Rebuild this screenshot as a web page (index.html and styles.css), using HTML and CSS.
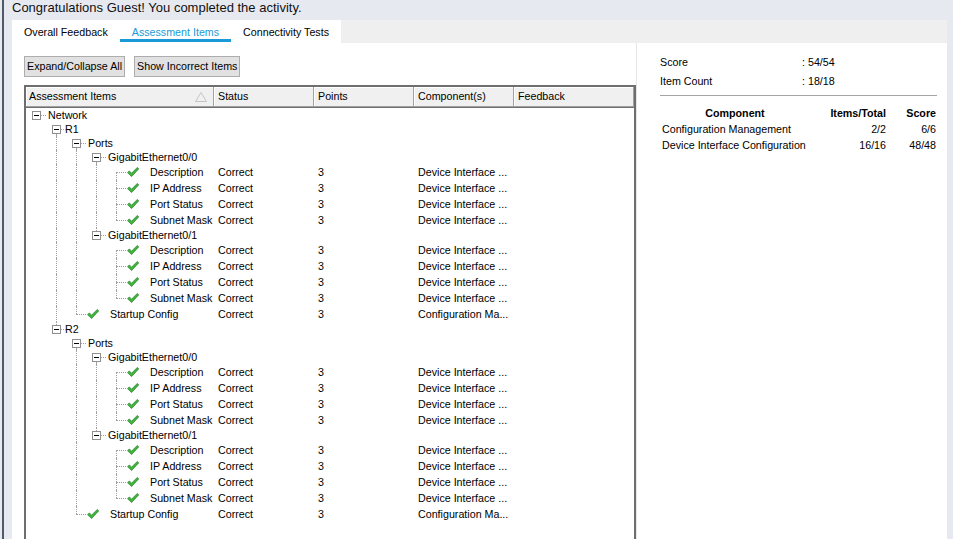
FILE: index.html
```html
<!DOCTYPE html>
<html>
<head>
<meta charset="utf-8">
<link rel="stylesheet" href="styles.css">
</head>
<body>
<div class="frame">
  <div class="title">Congratulations Guest! You completed the activity.</div>
  <div class="panel">
    <div class="tabs">
      <div class="tab">Overall Feedback</div>
      <div class="tab active">Assessment Items</div>
      <div class="tab">Connectivity Tests</div>
    </div>
    <div class="content">
      <div class="left">
        <div class="toolbar">
          <button class="btn">Expand/Collapse All</button>
          <button class="btn">Show Incorrect Items</button>
        </div>
        <div class="grid">
          <div class="ghead">
            <div class="hc c1"><span>Assessment Items</span><svg class="sort" width="12" height="10" viewBox="0 0 12 10"><polygon points="6,0.5 11.5,9.5 0.5,9.5" fill="none" stroke="#c4c4c4" stroke-width="1"/></svg></div>
            <div class="hc c2">Status</div>
            <div class="hc c3">Points</div>
            <div class="hc c4">Component(s)</div>
            <div class="hc c5">Feedback</div>
          </div>
          <div class="gbody">
            <!-- R1 -->
            <div class="row r14"><div class="tree"><span class="seg box"><i class="exp"></i></span><span class="label">Network</span></div><div class="cell"></div><div class="cell"></div><div class="cell"></div><div class="cell fb"></div></div>
            <div class="row r14"><div class="tree"><span class="seg"></span><span class="seg box down"><i class="exp"></i></span><span class="label tight">R1</span></div><div class="cell"></div><div class="cell"></div><div class="cell"></div><div class="cell fb"></div></div>
            <div class="row r14"><div class="tree"><span class="seg"></span><span class="seg pipe"></span><span class="seg box down"><i class="exp"></i></span><span class="label">Ports</span></div><div class="cell"></div><div class="cell"></div><div class="cell"></div><div class="cell fb"></div></div>
            <div class="row r14"><div class="tree"><span class="seg"></span><span class="seg pipe"></span><span class="seg pipe"></span><span class="seg box down"><i class="exp"></i></span><span class="label">GigabitEthernet0/0</span></div><div class="cell"></div><div class="cell"></div><div class="cell"></div><div class="cell fb"></div></div>
            <div class="row r16"><div class="tree"><span class="seg"></span><span class="seg pipe"></span><span class="seg pipe"></span><span class="seg pipe"></span><span class="seg leaf first"></span><span class="ok"><svg width="12" height="10" viewBox="0 0 12 10"><polygon points="0.5,5.6 2.4,4 4.5,6.2 10.4,0.4 11.7,1.9 4.5,9.6" fill="#3fb43f" stroke="#1d7f1d" stroke-width="0.7" stroke-linejoin="round"/></svg></span><span class="label">Description</span></div><div class="cell">Correct</div><div class="cell">3</div><div class="cell">Device Interface ...</div><div class="cell fb"></div></div>
            <div class="row r16"><div class="tree"><span class="seg"></span><span class="seg pipe"></span><span class="seg pipe"></span><span class="seg pipe"></span><span class="seg leaf mid"></span><span class="ok"><svg width="12" height="10" viewBox="0 0 12 10"><polygon points="0.5,5.6 2.4,4 4.5,6.2 10.4,0.4 11.7,1.9 4.5,9.6" fill="#3fb43f" stroke="#1d7f1d" stroke-width="0.7" stroke-linejoin="round"/></svg></span><span class="label">IP Address</span></div><div class="cell">Correct</div><div class="cell">3</div><div class="cell">Device Interface ...</div><div class="cell fb"></div></div>
            <div class="row r16"><div class="tree"><span class="seg"></span><span class="seg pipe"></span><span class="seg pipe"></span><span class="seg pipe"></span><span class="seg leaf mid"></span><span class="ok"><svg width="12" height="10" viewBox="0 0 12 10"><polygon points="0.5,5.6 2.4,4 4.5,6.2 10.4,0.4 11.7,1.9 4.5,9.6" fill="#3fb43f" stroke="#1d7f1d" stroke-width="0.7" stroke-linejoin="round"/></svg></span><span class="label">Port Status</span></div><div class="cell">Correct</div><div class="cell">3</div><div class="cell">Device Interface ...</div><div class="cell fb"></div></div>
            <div class="row r16"><div class="tree"><span class="seg"></span><span class="seg pipe"></span><span class="seg pipe"></span><span class="seg pipe"></span><span class="seg leaf last"></span><span class="ok"><svg width="12" height="10" viewBox="0 0 12 10"><polygon points="0.5,5.6 2.4,4 4.5,6.2 10.4,0.4 11.7,1.9 4.5,9.6" fill="#3fb43f" stroke="#1d7f1d" stroke-width="0.7" stroke-linejoin="round"/></svg></span><span class="label">Subnet Mask</span></div><div class="cell">Correct</div><div class="cell">3</div><div class="cell">Device Interface ...</div><div class="cell fb"></div></div>
            <div class="row r14"><div class="tree"><span class="seg"></span><span class="seg pipe"></span><span class="seg pipe"></span><span class="seg box up"><i class="exp"></i></span><span class="label">GigabitEthernet0/1</span></div><div class="cell"></div><div class="cell"></div><div class="cell"></div><div class="cell fb"></div></div>
            <div class="row r16"><div class="tree"><span class="seg"></span><span class="seg pipe"></span><span class="seg pipe"></span><span class="seg"></span><span class="seg leaf first"></span><span class="ok"><svg width="12" height="10" viewBox="0 0 12 10"><polygon points="0.5,5.6 2.4,4 4.5,6.2 10.4,0.4 11.7,1.9 4.5,9.6" fill="#3fb43f" stroke="#1d7f1d" stroke-width="0.7" stroke-linejoin="round"/></svg></span><span class="label">Description</span></div><div class="cell">Correct</div><div class="cell">3</div><div class="cell">Device Interface ...</div><div class="cell fb"></div></div>
            <div class="row r16"><div class="tree"><span class="seg"></span><span class="seg pipe"></span><span class="seg pipe"></span><span class="seg"></span><span class="seg leaf mid"></span><span class="ok"><svg width="12" height="10" viewBox="0 0 12 10"><polygon points="0.5,5.6 2.4,4 4.5,6.2 10.4,0.4 11.7,1.9 4.5,9.6" fill="#3fb43f" stroke="#1d7f1d" stroke-width="0.7" stroke-linejoin="round"/></svg></span><span class="label">IP Address</span></div><div class="cell">Correct</div><div class="cell">3</div><div class="cell">Device Interface ...</div><div class="cell fb"></div></div>
            <div class="row r16"><div class="tree"><span class="seg"></span><span class="seg pipe"></span><span class="seg pipe"></span><span class="seg"></span><span class="seg leaf mid"></span><span class="ok"><svg width="12" height="10" viewBox="0 0 12 10"><polygon points="0.5,5.6 2.4,4 4.5,6.2 10.4,0.4 11.7,1.9 4.5,9.6" fill="#3fb43f" stroke="#1d7f1d" stroke-width="0.7" stroke-linejoin="round"/></svg></span><span class="label">Port Status</span></div><div class="cell">Correct</div><div class="cell">3</div><div class="cell">Device Interface ...</div><div class="cell fb"></div></div>
            <div class="row r16"><div class="tree"><span class="seg"></span><span class="seg pipe"></span><span class="seg pipe"></span><span class="seg"></span><span class="seg leaf last"></span><span class="ok"><svg width="12" height="10" viewBox="0 0 12 10"><polygon points="0.5,5.6 2.4,4 4.5,6.2 10.4,0.4 11.7,1.9 4.5,9.6" fill="#3fb43f" stroke="#1d7f1d" stroke-width="0.7" stroke-linejoin="round"/></svg></span><span class="label">Subnet Mask</span></div><div class="cell">Correct</div><div class="cell">3</div><div class="cell">Device Interface ...</div><div class="cell fb"></div></div>
            <div class="row r16"><div class="tree"><span class="seg"></span><span class="seg pipe"></span><span class="seg leaf last"></span><span class="ok"><svg width="12" height="10" viewBox="0 0 12 10"><polygon points="0.5,5.6 2.4,4 4.5,6.2 10.4,0.4 11.7,1.9 4.5,9.6" fill="#3fb43f" stroke="#1d7f1d" stroke-width="0.7" stroke-linejoin="round"/></svg></span><span class="label">Startup Config</span></div><div class="cell">Correct</div><div class="cell">3</div><div class="cell">Configuration Ma...</div><div class="cell fb"></div></div>
            <!-- R2 -->
            <div class="row r14"><div class="tree"><span class="seg"></span><span class="seg box up"><i class="exp"></i></span><span class="label tight">R2</span></div><div class="cell"></div><div class="cell"></div><div class="cell"></div><div class="cell fb"></div></div>
            <div class="row r14"><div class="tree"><span class="seg"></span><span class="seg"></span><span class="seg box down"><i class="exp"></i></span><span class="label">Ports</span></div><div class="cell"></div><div class="cell"></div><div class="cell"></div><div class="cell fb"></div></div>
            <div class="row r14"><div class="tree"><span class="seg"></span><span class="seg"></span><span class="seg pipe"></span><span class="seg box down"><i class="exp"></i></span><span class="label">GigabitEthernet0/0</span></div><div class="cell"></div><div class="cell"></div><div class="cell"></div><div class="cell fb"></div></div>
            <div class="row r16"><div class="tree"><span class="seg"></span><span class="seg"></span><span class="seg pipe"></span><span class="seg pipe"></span><span class="seg leaf first"></span><span class="ok"><svg width="12" height="10" viewBox="0 0 12 10"><polygon points="0.5,5.6 2.4,4 4.5,6.2 10.4,0.4 11.7,1.9 4.5,9.6" fill="#3fb43f" stroke="#1d7f1d" stroke-width="0.7" stroke-linejoin="round"/></svg></span><span class="label">Description</span></div><div class="cell">Correct</div><div class="cell">3</div><div class="cell">Device Interface ...</div><div class="cell fb"></div></div>
            <div class="row r16"><div class="tree"><span class="seg"></span><span class="seg"></span><span class="seg pipe"></span><span class="seg pipe"></span><span class="seg leaf mid"></span><span class="ok"><svg width="12" height="10" viewBox="0 0 12 10"><polygon points="0.5,5.6 2.4,4 4.5,6.2 10.4,0.4 11.7,1.9 4.5,9.6" fill="#3fb43f" stroke="#1d7f1d" stroke-width="0.7" stroke-linejoin="round"/></svg></span><span class="label">IP Address</span></div><div class="cell">Correct</div><div class="cell">3</div><div class="cell">Device Interface ...</div><div class="cell fb"></div></div>
            <div class="row r16"><div class="tree"><span class="seg"></span><span class="seg"></span><span class="seg pipe"></span><span class="seg pipe"></span><span class="seg leaf mid"></span><span class="ok"><svg width="12" height="10" viewBox="0 0 12 10"><polygon points="0.5,5.6 2.4,4 4.5,6.2 10.4,0.4 11.7,1.9 4.5,9.6" fill="#3fb43f" stroke="#1d7f1d" stroke-width="0.7" stroke-linejoin="round"/></svg></span><span class="label">Port Status</span></div><div class="cell">Correct</div><div class="cell">3</div><div class="cell">Device Interface ...</div><div class="cell fb"></div></div>
            <div class="row r16"><div class="tree"><span class="seg"></span><span class="seg"></span><span class="seg pipe"></span><span class="seg pipe"></span><span class="seg leaf last"></span><span class="ok"><svg width="12" height="10" viewBox="0 0 12 10"><polygon points="0.5,5.6 2.4,4 4.5,6.2 10.4,0.4 11.7,1.9 4.5,9.6" fill="#3fb43f" stroke="#1d7f1d" stroke-width="0.7" stroke-linejoin="round"/></svg></span><span class="label">Subnet Mask</span></div><div class="cell">Correct</div><div class="cell">3</div><div class="cell">Device Interface ...</div><div class="cell fb"></div></div>
            <div class="row r14"><div class="tree"><span class="seg"></span><span class="seg"></span><span class="seg pipe"></span><span class="seg box up"><i class="exp"></i></span><span class="label">GigabitEthernet0/1</span></div><div class="cell"></div><div class="cell"></div><div class="cell"></div><div class="cell fb"></div></div>
            <div class="row r16"><div class="tree"><span class="seg"></span><span class="seg"></span><span class="seg pipe"></span><span class="seg"></span><span class="seg leaf first"></span><span class="ok"><svg width="12" height="10" viewBox="0 0 12 10"><polygon points="0.5,5.6 2.4,4 4.5,6.2 10.4,0.4 11.7,1.9 4.5,9.6" fill="#3fb43f" stroke="#1d7f1d" stroke-width="0.7" stroke-linejoin="round"/></svg></span><span class="label">Description</span></div><div class="cell">Correct</div><div class="cell">3</div><div class="cell">Device Interface ...</div><div class="cell fb"></div></div>
            <div class="row r16"><div class="tree"><span class="seg"></span><span class="seg"></span><span class="seg pipe"></span><span class="seg"></span><span class="seg leaf mid"></span><span class="ok"><svg width="12" height="10" viewBox="0 0 12 10"><polygon points="0.5,5.6 2.4,4 4.5,6.2 10.4,0.4 11.7,1.9 4.5,9.6" fill="#3fb43f" stroke="#1d7f1d" stroke-width="0.7" stroke-linejoin="round"/></svg></span><span class="label">IP Address</span></div><div class="cell">Correct</div><div class="cell">3</div><div class="cell">Device Interface ...</div><div class="cell fb"></div></div>
            <div class="row r16"><div class="tree"><span class="seg"></span><span class="seg"></span><span class="seg pipe"></span><span class="seg"></span><span class="seg leaf mid"></span><span class="ok"><svg width="12" height="10" viewBox="0 0 12 10"><polygon points="0.5,5.6 2.4,4 4.5,6.2 10.4,0.4 11.7,1.9 4.5,9.6" fill="#3fb43f" stroke="#1d7f1d" stroke-width="0.7" stroke-linejoin="round"/></svg></span><span class="label">Port Status</span></div><div class="cell">Correct</div><div class="cell">3</div><div class="cell">Device Interface ...</div><div class="cell fb"></div></div>
            <div class="row r16"><div class="tree"><span class="seg"></span><span class="seg"></span><span class="seg pipe"></span><span class="seg"></span><span class="seg leaf last"></span><span class="ok"><svg width="12" height="10" viewBox="0 0 12 10"><polygon points="0.5,5.6 2.4,4 4.5,6.2 10.4,0.4 11.7,1.9 4.5,9.6" fill="#3fb43f" stroke="#1d7f1d" stroke-width="0.7" stroke-linejoin="round"/></svg></span><span class="label">Subnet Mask</span></div><div class="cell">Correct</div><div class="cell">3</div><div class="cell">Device Interface ...</div><div class="cell fb"></div></div>
            <div class="row r16"><div class="tree"><span class="seg"></span><span class="seg"></span><span class="seg leaf last"></span><span class="ok"><svg width="12" height="10" viewBox="0 0 12 10"><polygon points="0.5,5.6 2.4,4 4.5,6.2 10.4,0.4 11.7,1.9 4.5,9.6" fill="#3fb43f" stroke="#1d7f1d" stroke-width="0.7" stroke-linejoin="round"/></svg></span><span class="label">Startup Config</span></div><div class="cell">Correct</div><div class="cell">3</div><div class="cell">Configuration Ma...</div><div class="cell fb"></div></div>
          </div>
        </div>
      </div>
      <div class="right">
        <div class="stats">
          <div>Score</div><div>: 54/54</div>
          <div>Item Count</div><div>: 18/18</div>
        </div>
        <div class="rule"></div>
        <div class="comp">
          <div class="h center">Component</div><div class="h num">Items/Total</div><div class="h num">Score</div>
          <div class="name">Configuration Management</div><div class="num">2/2</div><div class="num">6/6</div>
          <div class="name">Device Interface Configuration</div><div class="num">16/16</div><div class="num">48/48</div>
        </div>
      </div>
    </div>
  </div>
</div>
</body>
</html>
```

FILE: styles.css
```css
html, body {
  margin: 0;
  padding: 0;
}
body {
  background: #e7e9f1;
  font-family: "Liberation Sans", Arial, sans-serif;
  font-size: 10.7px;
  color: #000;
  height: 539px;
  overflow: hidden;
}
.frame {
  margin-left: 2px;
  border-left: 2px solid #525a68;
  padding-left: 8px;
  padding-right: 6px;
  height: 539px;
  box-sizing: border-box;
  display: flex;
  flex-direction: column;
}
.title {
  font-size: 13px;
  line-height: 16px;
  height: 20px;
  flex: none;
  color: #111;
}
.panel {
  flex: 1;
  min-height: 0;
  background: #fff;
  display: flex;
  flex-direction: column;
}
.tabs {
  display: flex;
  height: 23px;
  flex: none;
  background: #efefef;
}
.tab {
  position: relative;
  background: #fff;
  padding: 1px 12px 0;
  line-height: 22px;
  white-space: nowrap;
}
.tab.active {
  color: #1a9ad6;
}
.tab.active::after {
  content: "";
  position: absolute;
  left: 0;
  right: 0;
  bottom: 1px;
  height: 3px;
  background: #1a9ad6;
}
.content {
  flex: 1;
  min-height: 0;
  display: flex;
}
.left {
  width: 612px;
  padding-left: 12px;
  flex: none;
  display: flex;
  flex-direction: column;
}
.toolbar {
  display: flex;
  gap: 9px;
  margin-top: 13px;
  flex: none;
}
.btn {
  font: inherit;
  color: #000;
  height: 21px;
  line-height: 19px;
  padding: 0 2px;
  margin: 0;
  border: 1px solid #adadad;
  background: #e1e1e1;
  border-radius: 0;
  white-space: nowrap;
}
.grid {
  margin-top: 8px;
  flex: 1;
  min-height: 0;
  border: 2px solid #6e6e6e;
  border-bottom: none;
  display: flex;
  flex-direction: column;
  background: #fff;
}
.ghead {
  display: flex;
  height: 20px;
  flex: none;
  border-bottom: 1px solid #6e6e6e;
  background: #f0f0f0;
}
.hc {
  box-sizing: border-box;
  height: 20px;
  line-height: 19px;
  padding-left: 4px;
  border-right: 1px solid #a0a0a0;
  border-bottom: 1px solid #a0a0a0;
  box-shadow: inset 1px 1px 0 #fff;
  white-space: nowrap;
  flex: none;
}
.hc.c1 {
  width: 188px;
  padding-left: 3px;
  display: flex;
  justify-content: space-between;
  align-items: center;
}
.sort {
  margin-right: 6px;
}
.hc.c2, .hc.c3, .hc.c4 {
  width: 100px;
}
.hc.c5 {
  width: 120px;
}
.gbody {
  flex: 1;
}
.row {
  display: flex;
}
.r14 {
  height: 14px;
  line-height: 14px;
}
.r16 {
  height: 16px;
  line-height: 16px;
}
.tree {
  width: 188px;
  flex: none;
  display: flex;
  height: 100%;
}
.cell {
  width: 100px;
  flex: none;
  box-sizing: border-box;
  padding-left: 4px;
  white-space: nowrap;
  overflow: hidden;
}
.cell.fb {
  width: 120px;
}
.seg {
  position: relative;
  width: 20px;
  flex: none;
  height: 100%;
}
.pipe::before,
.box.down::before,
.box.up::before,
.leaf::before {
  content: "";
  position: absolute;
  left: 10px;
  border-left: 1px dotted #a0a0a0;
}
.pipe::before {
  top: 0;
  bottom: 0;
}
.box.down::before {
  top: 12px;
  bottom: 0;
}
.box.up::before {
  top: 0;
  height: 3px;
}
.box::after {
  content: "";
  position: absolute;
  left: 15px;
  top: 7px;
  width: 5px;
  border-top: 1px dotted #a0a0a0;
}
.exp {
  position: absolute;
  left: 6px;
  top: 3px;
  width: 9px;
  height: 9px;
  box-sizing: border-box;
  border: 1px solid #8f8f8f;
  background: #fff;
}
.exp::before {
  content: "";
  position: absolute;
  left: 1px;
  top: 3px;
  width: 5px;
  height: 1px;
  background: #000;
}
.leaf::after {
  content: "";
  position: absolute;
  left: 10px;
  top: 8px;
  width: 10px;
  border-top: 1px dotted #a0a0a0;
}
.leaf.first::before {
  top: 8px;
  bottom: 0;
}
.leaf.mid::before {
  top: 0;
  bottom: 0;
}
.leaf.last::before {
  top: 0;
  height: 8px;
}
.ok {
  width: 24px;
  flex: none;
  display: flex;
  align-items: center;
}
.ok svg {
  margin-left: 1px;
  display: block;
}
.label {
  white-space: nowrap;
  margin-left: 2px;
}
.ok + .label {
  margin-left: 0;
}
.label.tight {
  margin-left: -1px;
}
.right {
  flex: 1;
  border-left: 1px solid #e6e6e6;
  padding: 10px 0 0 23px;
}
.stats {
  display: grid;
  grid-template-columns: 142px auto;
  line-height: 19px;
}
.rule {
  width: 277px;
  height: 1px;
  background: #a5a5a5;
  margin: 4px 0 9px;
}
.comp {
  display: grid;
  grid-template-columns: 150px 76px 50px;
  line-height: 16px;
}
.comp .h {
  font-weight: bold;
}
.comp .center {
  text-align: center;
}
.comp .num {
  text-align: right;
}
.comp .name {
  padding-left: 2px;
  white-space: nowrap;
}
```
